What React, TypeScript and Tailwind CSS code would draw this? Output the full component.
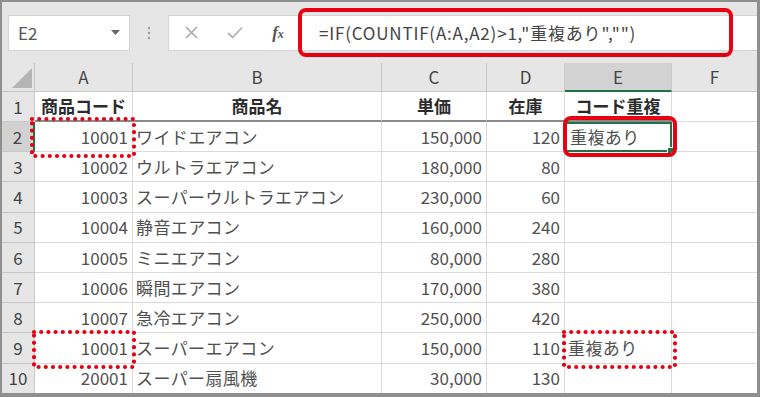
import React from "react";

type Row = [string, string, string, string, string];

const rows: Row[] = [
    ["10001", "ワイドエアコン", "150,000", "120", "重複あり"],
    ["10002", "ウルトラエアコン", "180,000", "80", ""],
    ["10003", "スーパーウルトラエアコン", "230,000", "60", ""],
    ["10004", "静音エアコン", "160,000", "240", ""],
    ["10005", "ミニエアコン", "80,000", "280", ""],
    ["10006", "瞬間エアコン", "170,000", "380", ""],
    ["10007", "急冷エアコン", "250,000", "420", ""],
    ["10001", "スーパーエアコン", "150,000", "110", "重複あり"],
    ["20001", "スーパー扇風機", "30,000", "130", ""],
];

const font = { fontFamily: '"Noto Sans CJK JP", "Noto Sans", sans-serif' };

const cols = "grid grid-cols-[33px_98px_249px_105px_78px_107px_1fr]";

function Dotted({ left, top, w, h }: { left: number; top: number; w: number; h: number }) {
    // red dotted marker drawn over the grid
    return (
        <svg
            className="absolute pointer-events-none"
            style={{ left: left - 3, top: top - 3 }}
            width={w + 6}
            height={h + 6}
        >
            <rect
                x={3}
                y={3}
                width={w}
                height={h}
                fill="none"
                stroke="#e60012"
                strokeWidth={4.2}
                strokeLinecap="round"
                strokeDasharray="0 7.2"
            />
        </svg>
    );
}

export default function App() {
    return (
        <div
            className="w-[760px] h-[397px] overflow-hidden border-t-2 border-l-2 border-r-[3px] border-b-4 border-[#8f8f8f] bg-[#e6e6e6] text-[#505050]"
            style={font}
        >
            <div className="relative w-full h-full">
                {/* formula bar */}
                <div className="h-[61px] flex items-center">
                    <div className="ml-[6px] w-[122px] h-[36px] bg-white border border-[#d4d4d4] flex items-center justify-between pl-[9px] pr-[9px]">
                        <span className="text-[17px] text-[#555]">E2</span>
                        <svg width="9" height="6" viewBox="0 0 9 6">
                            <polygon points="0,0 9,0 4.5,5" fill="#666" />
                        </svg>
                    </div>
                    <div className="w-[38px] flex justify-center">
                        <svg width="4" height="14" viewBox="0 0 4 14">
                            <circle cx="2" cy="2" r="1.2" fill="#9a9a9a" />
                            <circle cx="2" cy="7" r="1.2" fill="#9a9a9a" />
                            <circle cx="2" cy="12" r="1.2" fill="#9a9a9a" />
                        </svg>
                    </div>
                    <div className="flex-1 h-[36px] bg-white border-y border-l border-[#d4d4d4] flex items-center">
                        <span className="w-[44px] flex justify-center">
                            <svg width="13" height="13" viewBox="0 0 13 13">
                                <path d="M1 1 L12 12 M12 1 L1 12" stroke="#a8a8a8" strokeWidth="1.6" />
                            </svg>
                        </span>
                        <span className="w-[43px] flex justify-center">
                            <svg width="16" height="13" viewBox="0 0 16 13">
                                <path d="M1 7 L5.5 11.5 L15 1.5" fill="none" stroke="#b4b4b4" strokeWidth="1.8" />
                            </svg>
                        </span>
                        <span
                            className="w-[44px] flex justify-center items-baseline italic font-bold text-[#555]"
                            style={{ fontFamily: '"Liberation Serif", serif' }}
                        >
                            <span className="text-[17px]">f</span>
                            <span className="text-[12px]">x</span>
                        </span>
                        <span className="pl-[19px] text-[17px] text-[#444] whitespace-nowrap tracking-[0.8px]">
                            =IF(COUNTIF(A:A,A2)&gt;1,"重複あり","")
                        </span>
                    </div>
                </div>

                {/* column headers */}
                <div className={`${cols} h-[29px] text-[17px] text-[#444]`}>
                    <div className="relative border-r border-b border-[#c8c8c8]">
                        <svg className="absolute left-[10px] top-[5px]" width="21" height="21" viewBox="0 0 21 21">
                            <polygon points="20,0 20,20 0,20" fill="#b5b5b5" />
                        </svg>
                    </div>
                    {["A", "B", "C", "D"].map((c) => (
                        <div key={c} className="flex items-center justify-center border-r border-b border-[#c8c8c8]">
                            {c}
                        </div>
                    ))}
                    <div className="flex items-center justify-center bg-[#d2d2d2] border-r border-[#c8c8c8] border-b-2 border-b-[#217346]">
                        E
                    </div>
                    <div className="flex items-center justify-center border-b border-[#c8c8c8]">F</div>
                </div>

                {/* row 1 */}
                <div className={`${cols} h-[30px] bg-white text-[17px]`}>
                    <div className="flex items-center justify-center bg-[#e6e6e6] border-r border-b border-[#c8c8c8] text-[#444]">1</div>
                    {["商品コード", "商品名", "単価", "在庫", "コード重複"].map((t) => (
                        <div
                            key={t}
                            className="flex items-center justify-center font-bold text-[#2b2b2b] border-r border-[#dadada] border-b-2 border-b-[#8a8a8a] whitespace-nowrap"
                        >
                            {t}
                        </div>
                    ))}
                    <div className="border-b border-[#dadada]" />
                </div>

                {rows.map((r, i) => {
                    const n = i + 2;
                    const sel = n === 2;
                    return (
                        <div key={n} className={`${cols} h-[30.2px] bg-white text-[17px]`}>
                            <div
                                className={`flex items-center justify-center border-b border-[#c8c8c8] text-[#444] ${
                                    sel ? "bg-[#d2d2d2] border-r-2 border-r-[#217346]" : "bg-[#e6e6e6] border-r border-r-[#c8c8c8]"
                                }`}
                            >
                                {n}
                            </div>
                            <div className="flex items-center justify-end pr-[4px] border-r border-b border-[#dadada]">{r[0]}</div>
                            <div className="flex items-center pl-[3px] border-r border-b border-[#dadada] whitespace-nowrap tracking-[0.4px]">{r[1]}</div>
                            <div className="flex items-center justify-end pr-[4px] border-r border-b border-[#dadada]">{r[2]}</div>
                            <div className="flex items-center justify-end pr-[4px] border-r border-b border-[#dadada]">{r[3]}</div>
                            <div
                                className={`relative flex items-center pl-[3px] whitespace-nowrap tracking-[0.4px] ${
                                    sel ? "border-2 border-[#217346]" : "border-r border-b border-[#dadada]"
                                }`}
                            >
                                {r[4]}
                                {sel && (
                                    <span className="absolute right-[-4px] bottom-[-4px] w-[7px] h-[7px] bg-[#217346] border border-white" />
                                )}
                            </div>
                            <div className="border-b border-[#dadada]" />
                        </div>
                    );
                })}

                {/* red call-outs */}
                <div className="absolute left-[296px] top-[6px] w-[435px] h-[49px] border-4 border-[#e60012] rounded-[8px] pointer-events-none" />
                <div className="absolute left-[561px] top-[114px] w-[114px] h-[41px] border-4 border-[#e60012] rounded-[8px] pointer-events-none" />
                <Dotted left={30} top={117} w={102} h={37} />
                <Dotted left={32} top={330} w={100} h={35} />
                <Dotted left={562} top={330} w={111} h={35} />
            </div>
        </div>
    );
}
